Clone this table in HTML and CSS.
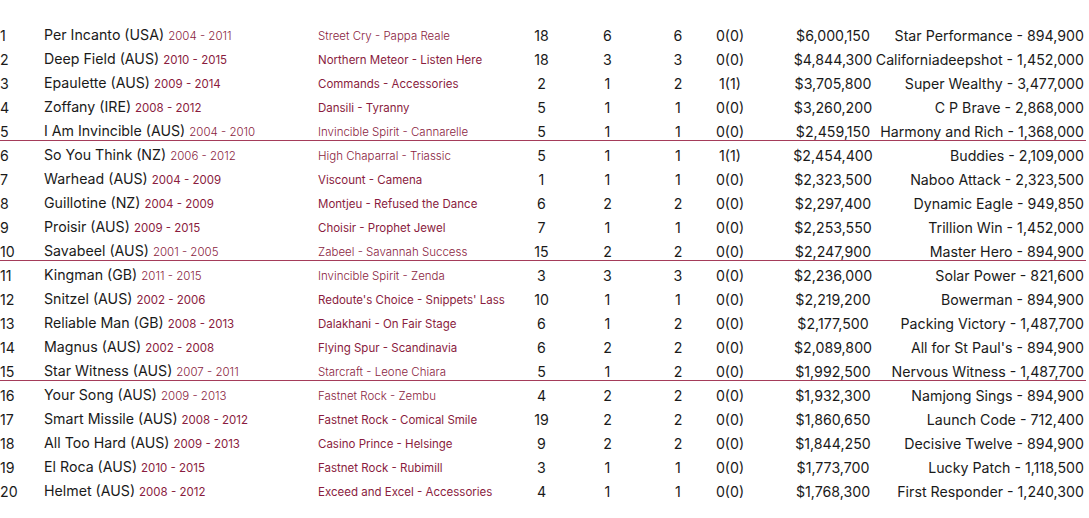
FILE: index.html
```html
<!DOCTYPE html>
<html lang="en">
<head>
<meta charset="utf-8">
<title>Leading Sires</title>
<link rel="stylesheet" href="styles.css">
</head>
<body>
<div class="board">
  <div class="row light"><span class="rank">1</span><span class="name">Per Incanto (USA) <span class="years">2004 - 2011</span></span><span class="sire">Street Cry - Pappa Reale</span><span class="num">18</span><span class="num">6</span><span class="num">6</span><span class="num">0(0)</span><span class="prize">$6,000,150</span><span class="best">Star Performance - 894,900</span></div>
  <div class="row"><span class="rank">2</span><span class="name">Deep Field (AUS) <span class="years">2010 - 2015</span></span><span class="sire">Northern Meteor - Listen Here</span><span class="num">18</span><span class="num">3</span><span class="num">3</span><span class="num">0(0)</span><span class="prize">$4,844,300</span><span class="best">Californiadeepshot - 1,452,000</span></div>
  <div class="row"><span class="rank">3</span><span class="name">Epaulette (AUS) <span class="years">2009 - 2014</span></span><span class="sire">Commands - Accessories</span><span class="num">2</span><span class="num">1</span><span class="num">2</span><span class="num">1(1)</span><span class="prize">$3,705,800</span><span class="best">Super Wealthy - 3,477,000</span></div>
  <div class="row"><span class="rank">4</span><span class="name">Zoffany (IRE) <span class="years">2008 - 2012</span></span><span class="sire">Dansili - Tyranny</span><span class="num">5</span><span class="num">1</span><span class="num">1</span><span class="num">0(0)</span><span class="prize">$3,260,200</span><span class="best">C P Brave - 2,868,000</span></div>
  <div class="row light group-end"><span class="rank">5</span><span class="name">I Am Invincible (AUS) <span class="years">2004 - 2010</span></span><span class="sire">Invincible Spirit - Cannarelle</span><span class="num">5</span><span class="num">1</span><span class="num">1</span><span class="num">0(0)</span><span class="prize">$2,459,150</span><span class="best">Harmony and Rich - 1,368,000</span></div>

  <div class="row light"><span class="rank">6</span><span class="name">So You Think (NZ) <span class="years">2006 - 2012</span></span><span class="sire">High Chaparral - Triassic</span><span class="num">5</span><span class="num">1</span><span class="num">1</span><span class="num">1(1)</span><span class="prize">$2,454,400</span><span class="best">Buddies - 2,109,000</span></div>
  <div class="row"><span class="rank">7</span><span class="name">Warhead (AUS) <span class="years">2004 - 2009</span></span><span class="sire">Viscount - Camena</span><span class="num">1</span><span class="num">1</span><span class="num">1</span><span class="num">0(0)</span><span class="prize">$2,323,500</span><span class="best">Naboo Attack - 2,323,500</span></div>
  <div class="row"><span class="rank">8</span><span class="name">Guillotine (NZ) <span class="years">2004 - 2009</span></span><span class="sire">Montjeu - Refused the Dance</span><span class="num">6</span><span class="num">2</span><span class="num">2</span><span class="num">0(0)</span><span class="prize">$2,297,400</span><span class="best">Dynamic Eagle - 949,850</span></div>
  <div class="row"><span class="rank">9</span><span class="name">Proisir (AUS) <span class="years">2009 - 2015</span></span><span class="sire">Choisir - Prophet Jewel</span><span class="num">7</span><span class="num">1</span><span class="num">1</span><span class="num">0(0)</span><span class="prize">$2,253,550</span><span class="best">Trillion Win - 1,452,000</span></div>
  <div class="row light group-end"><span class="rank">10</span><span class="name">Savabeel (AUS) <span class="years">2001 - 2005</span></span><span class="sire">Zabeel - Savannah Success</span><span class="num">15</span><span class="num">2</span><span class="num">2</span><span class="num">0(0)</span><span class="prize">$2,247,900</span><span class="best">Master Hero - 894,900</span></div>

  <div class="row light"><span class="rank">11</span><span class="name">Kingman (GB) <span class="years">2011 - 2015</span></span><span class="sire">Invincible Spirit - Zenda</span><span class="num">3</span><span class="num">3</span><span class="num">3</span><span class="num">0(0)</span><span class="prize">$2,236,000</span><span class="best">Solar Power - 821,600</span></div>
  <div class="row"><span class="rank">12</span><span class="name">Snitzel (AUS) <span class="years">2002 - 2006</span></span><span class="sire">Redoute's Choice - Snippets' Lass</span><span class="num">10</span><span class="num">1</span><span class="num">1</span><span class="num">0(0)</span><span class="prize">$2,219,200</span><span class="best">Bowerman - 894,900</span></div>
  <div class="row"><span class="rank">13</span><span class="name">Reliable Man (GB) <span class="years">2008 - 2013</span></span><span class="sire">Dalakhani - On Fair Stage</span><span class="num">6</span><span class="num">1</span><span class="num">2</span><span class="num">0(0)</span><span class="prize">$2,177,500</span><span class="best">Packing Victory - 1,487,700</span></div>
  <div class="row"><span class="rank">14</span><span class="name">Magnus (AUS) <span class="years">2002 - 2008</span></span><span class="sire">Flying Spur - Scandinavia</span><span class="num">6</span><span class="num">2</span><span class="num">2</span><span class="num">0(0)</span><span class="prize">$2,089,800</span><span class="best">All for St Paul's - 894,900</span></div>
  <div class="row light group-end"><span class="rank">15</span><span class="name">Star Witness (AUS) <span class="years">2007 - 2011</span></span><span class="sire">Starcraft - Leone Chiara</span><span class="num">5</span><span class="num">1</span><span class="num">2</span><span class="num">0(0)</span><span class="prize">$1,992,500</span><span class="best">Nervous Witness - 1,487,700</span></div>

  <div class="row light"><span class="rank">16</span><span class="name">Your Song (AUS) <span class="years">2009 - 2013</span></span><span class="sire">Fastnet Rock - Zembu</span><span class="num">4</span><span class="num">2</span><span class="num">2</span><span class="num">0(0)</span><span class="prize">$1,932,300</span><span class="best">Namjong Sings - 894,900</span></div>
  <div class="row"><span class="rank">17</span><span class="name">Smart Missile (AUS) <span class="years">2008 - 2012</span></span><span class="sire">Fastnet Rock - Comical Smile</span><span class="num">19</span><span class="num">2</span><span class="num">2</span><span class="num">0(0)</span><span class="prize">$1,860,650</span><span class="best">Launch Code - 712,400</span></div>
  <div class="row"><span class="rank">18</span><span class="name">All Too Hard (AUS) <span class="years">2009 - 2013</span></span><span class="sire">Casino Prince - Helsinge</span><span class="num">9</span><span class="num">2</span><span class="num">2</span><span class="num">0(0)</span><span class="prize">$1,844,250</span><span class="best">Decisive Twelve - 894,900</span></div>
  <div class="row"><span class="rank">19</span><span class="name">El Roca (AUS) <span class="years">2010 - 2015</span></span><span class="sire">Fastnet Rock - Rubimill</span><span class="num">3</span><span class="num">1</span><span class="num">1</span><span class="num">0(0)</span><span class="prize">$1,773,700</span><span class="best">Lucky Patch - 1,118,500</span></div>
  <div class="row"><span class="rank">20</span><span class="name">Helmet (AUS) <span class="years">2008 - 2012</span></span><span class="sire">Exceed and Excel - Accessories</span><span class="num">4</span><span class="num">1</span><span class="num">1</span><span class="num">0(0)</span><span class="prize">$1,768,300</span><span class="best">First Responder - 1,240,300</span></div>
</div>
</body>
</html>
```

FILE: styles.css
```css
html, body {
  margin: 0;
  padding: 0;
  background: #ffffff;
}

body {
  font-family: "Inter", "Liberation Sans", sans-serif;
  font-size: 14.2px;
  color: #1a1a1a;
}

.board {
  padding: 25px 3px 0 0;
}

.row {
  display: grid;
  grid-template-columns: 44px 274px 190px 67px 65px 76px 28px 178px minmax(0, 1fr);
  align-items: center;
  height: 20px;
  line-height: 20px;
  margin-bottom: 4px;
  padding-right: 2px;
  white-space: nowrap;
}

.row.group-end {
  box-sizing: border-box;
  height: 20px;
  border-bottom: 1px solid #a53c5a;
  margin-bottom: 4px;
}

.rank {
  justify-self: start;
}

.name {
  justify-self: start;
}

.years {
  font-size: 11.5px;
  color: #8a1c3e;
}

.sire {
  justify-self: start;
  font-size: 11.5px;
  color: #8a1c3e;
}

.num,
.prize {
  justify-self: center;
}

.best {
  justify-self: end;
}

.light .years,
.light .sire {
  font-weight: 300;
}
```
